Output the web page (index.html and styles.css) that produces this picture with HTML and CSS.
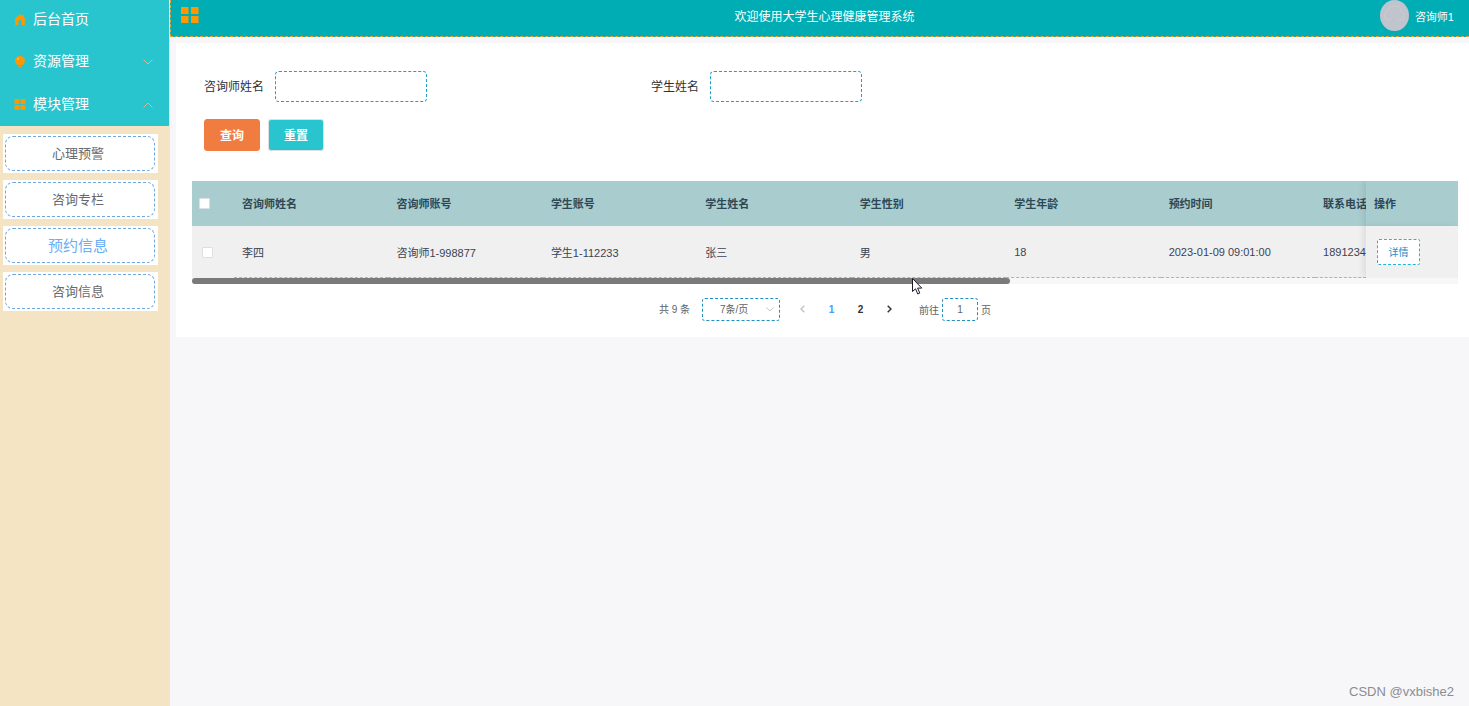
FILE: index.html
```html
<!DOCTYPE html>
<html lang="zh-CN">
<head>
<meta charset="utf-8">
<title>大学生心理健康管理系统</title>
<link rel="stylesheet" href="styles.css">
</head>
<body>
<div class="layout">
  <aside class="sidebar">
    <nav class="menu">
      <a class="menu-item menu-home" href="#">
        <svg class="menu-icon" viewBox="0 0 12 12"><path d="M6 .6 0 6h1.2v5.500h3.100V8.200a1.700 1.700 0 0 1 3.400 0v3.300h3.100V6H12L9.900 4.100V1.600H8.400v1.100z"/></svg>
        <span class="menu-text">后台首页</span>
      </a>
      <button class="menu-item" type="button">
        <svg class="menu-icon" viewBox="0 0 12 14"><path d="M6 1a5.300 5.300 0 0 0-5.300 5.200c0 2.100 1.300 3.300 2.800 4.700h5c1.500-1.400 2.800-2.600 2.800-4.700A5.300 5.300 0 0 0 6 1zM4.300 11.600h3.400v1.600H4.300z"/><path class="shine" d="M3 5.500A3 3 0 0 1 5 3.300"/></svg>
        <span class="menu-text">资源管理</span>
        <svg class="chevron" viewBox="0 0 10 6"><path d="M.5.500 5 5 9.500.500"/></svg>
      </button>
      <button class="menu-item" type="button">
        <svg class="menu-icon" viewBox="0 0 12 12"><path d="M.5.500h5v5h-5zM6.500.500h5v5h-5zM.5 6.500h5v5h-5zM6.500 6.500h5v5h-5z"/></svg>
        <span class="menu-text">模块管理</span>
        <svg class="chevron" viewBox="0 0 10 6"><path d="M.5 5.500 5 1l4.500 4.500"/></svg>
      </button>
    </nav>
    <nav class="submenu">
      <a class="sub-item" href="#"><span class="sub-label">心理预警</span></a>
      <a class="sub-item" href="#"><span class="sub-label">咨询专栏</span></a>
      <a class="sub-item active" href="#"><span class="sub-label">预约信息</span></a>
      <a class="sub-item" href="#"><span class="sub-label">咨询信息</span></a>
    </nav>
  </aside>

  <div class="content">
    <header class="topbar">
      <button class="collapse" type="button" aria-label="折叠菜单">
        <svg viewBox="0 0 18 16"><path d="M0 0h7.500v7H0zM10 0h7.500v7H10zM0 9h7.500v7H0zM10 9h7.500v7H10z"/></svg>
      </button>
      <h1 class="title">欢迎使用大学生心理健康管理系统</h1>
      <div class="user">
        <svg class="avatar" viewBox="0 0 29 31"><ellipse cx="14.500" cy="15.500" rx="14.500" ry="15.500"/><path d="M8 20a4.500 4.500 0 0 1-1-8.500 7.500 7.500 0 0 1 14.500 0A4.500 4.500 0 0 1 21 20c-2 0-3-.5-3.500-1.500M8 20c2 0 3-.5 3.500-1.500"/></svg>
        <span>咨询师1</span>
      </div>
    </header>

    <main class="card">
      <form class="search">
        <div class="fields">
          <div class="field">
            <label for="counselor">咨询师姓名</label>
            <input id="counselor" class="text-input" type="text">
          </div>
          <div class="field">
            <label for="student">学生姓名</label>
            <input id="student" class="text-input" type="text">
          </div>
        </div>
        <div class="actions">
          <button class="btn btn-query" type="button">查询</button>
          <button class="btn btn-reset" type="button">重置</button>
        </div>
      </form>

      <div class="table-wrap">
        <table class="table">
          <colgroup>
            <col class="col-check">
            <col class="col-data" span="7">
            <col>
            <col class="col-action">
          </colgroup>
          <thead>
            <tr>
              <th class="check-cell"><input class="check" type="checkbox" aria-label="全选"></th>
              <th>咨询师姓名</th>
              <th>咨询师账号</th>
              <th>学生账号</th>
              <th>学生姓名</th>
              <th>学生性别</th>
              <th>学生年龄</th>
              <th>预约时间</th>
              <th class="clipped">联系电话</th>
              <th class="fixed">操作</th>
            </tr>
          </thead>
          <tbody>
            <tr>
              <td class="check-cell row-check"><input class="check" type="checkbox" aria-label="选择李四"></td>
              <td>李四</td>
              <td>咨询师1-998877</td>
              <td>学生1-112233</td>
              <td>张三</td>
              <td>男</td>
              <td>18</td>
              <td>2023-01-09 09:01:00</td>
              <td class="clipped">1891234</td>
              <td class="fixed"><button class="detail" type="button">详情</button></td>
            </tr>
          </tbody>
        </table>
      </div>
      <div class="scroll-track">
        <div class="scroll-thumb"></div>
        <svg class="pointer" viewBox="0 0 11 17"><path d="M.5.500v13l3-2.700 2.300 5.200 2-1-2.200-4.900h4.200z"/></svg>
      </div>

      <div class="pagination">
        <span class="total">共 9 条</span>
        <div class="size">
          <select class="size-select" aria-label="每页条数"><option>7条/页</option></select>
          <svg class="size-arrow" viewBox="0 0 8 5"><path d="M.5.500 4 4 7.500.500"/></svg>
        </div>
        <button class="page disabled" type="button" aria-label="上一页"><svg viewBox="0 0 5 8"><path d="M4.300.700 1 4l3.300 3.300"/></svg></button>
        <button class="page current" type="button">1</button>
        <button class="page" type="button">2</button>
        <button class="page" type="button" aria-label="下一页"><svg viewBox="0 0 5 8"><path d="M.700.700 4 4 .700 7.300"/></svg></button>
        <label class="jump">前往<input class="jump-input" type="text" value="1">页</label>
      </div>
    </main>
    <footer class="watermark">CSDN @vxbishe2</footer>
  </div>
</div>
</body>
</html>
```
FILE: styles.css
```css
* {
  box-sizing: border-box;
}

body {
  margin: 0;
  font-family: "Liberation Sans", "Noto Sans CJK SC", sans-serif;
  font-size: 12px;
  color: #303133;
  background: #f7f7fa;
}

button,
input,
select {
  margin: 0;
  font-family: inherit;
}

a {
  text-decoration: none;
}

.layout {
  display: flex;
  min-height: 100vh;
}

/* Sidebar */

.sidebar {
  flex: none;
  width: 170px;
  background: #f5e4c3;
  border-right: 1px solid #e6e6e6;
}

.menu {
  display: flex;
  flex-direction: column;
  background: #29c5ce;
}

.menu-item {
  display: flex;
  align-items: center;
  gap: 7px;
  height: 43px;
  padding: 0 16px 0 14px;
  border: 0;
  background: none;
  color: #fff;
  font-size: 14px;
}

.menu-home {
  height: 40px;
  padding-bottom: 2px;
}

.menu-text {
  padding-bottom: 3px;
}

.menu-icon {
  width: 12px;
  height: 13px;
  fill: #ff9800;
}

.shine {
  fill: none;
  stroke: #ffd28a;
}

.chevron {
  width: 10px;
  height: 6px;
  margin-left: auto;
  fill: none;
  stroke: #d9b98a;
}

.submenu {
  display: flex;
  flex-direction: column;
  gap: 7px;
  padding: 8px 11px 8px 3px;
}

.sub-item {
  display: flex;
  height: 39px;
  padding: 2px;
  padding-right: 3px;
  background: #fff;
  color: #666a70;
  font-size: 13px;
}

.sub-label {
  flex: 1;
  display: flex;
  align-items: center;
  justify-content: center;
  padding: 0 4px 2px 0;
  border: 1px dashed #6fa8dc;
  border-radius: 8px;
}

.sub-item.active {
  color: #6aaef5;
  font-size: 15px;
}

/* Header */

.content {
  flex: 1;
  min-width: 0;
  display: flex;
  flex-direction: column;
}

.topbar {
  display: grid;
  grid-template-columns: 1fr auto 1fr;
  height: 37px;
  padding: 0 15px 5px 10px;
  background: #00adb5;
  border-bottom: 1px dashed #f0a030;
  border-left: 1px dashed #f0a030;
  color: #fff;
}

.collapse {
  justify-self: start;
  align-self: center;
  display: flex;
  padding: 0 0 2px;
  border: 0;
  background: none;
}

.collapse svg {
  width: 18px;
  height: 16px;
  fill: #ff9800;
}

.title {
  align-self: center;
  margin: 0;
  padding-left: 14px;
  font-size: 12px;
  font-weight: 400;
}

.user {
  justify-self: end;
  display: flex;
  align-items: center;
  gap: 6px;
  font-size: 11px;
}

.avatar {
  width: 29px;
  height: 31px;
  fill: #c0c4cc;
}

.avatar path {
  fill: none;
  stroke: #cfccd0;
}

/* Card */

.card {
  margin: 6px 0 0 6px;
  padding: 28px 11px 16px 16px;
  background: #fff;
}

.search {
  padding: 0 12px;
}

.fields {
  display: grid;
  grid-template-columns: 36% 1fr;
}

.field {
  display: flex;
  align-items: center;
  gap: 11px;
}

.field label {
  padding-bottom: 2px;
  font-size: 12px;
}

.text-input {
  width: 152px;
  height: 31px;
  padding: 0 8px;
  border: 1px dashed #1f9fc4;
  border-radius: 4px;
  background: #fff;
  font-size: 12px;
}

.actions {
  display: flex;
  gap: 8px;
  margin: 17px 0 30px;
}

.btn {
  width: 56px;
  height: 32px;
  padding: 0 0 2px;
  border: 1px solid #dcdfe6;
  border-radius: 3px;
  color: #fff;
  font-size: 12px;
  font-weight: 700;
}

.btn-query {
  background: #f17c40;
  border-color: #f17c40;
}

.btn-reset {
  background: #29c5ce;
}

/* Table */

.table-wrap {
  overflow: hidden;
}

.table {
  width: 100%;
  min-width: 1100px;
  table-layout: fixed;
  border-collapse: separate;
  border-spacing: 0;
  font-size: 11px;
  color: #3c4353;
}

.col-check {
  width: 42px;
}

.col-data {
  width: 12.2%;
}

.col-action {
  width: 92px;
}

.table th,
.table td {
  padding: 0 8px;
  text-align: left;
  white-space: nowrap;
}

.table th {
  height: 45px;
  padding-bottom: 2px;
  background: #a9cdcf;
  color: #2f4856;
}

.table td {
  height: 52px;
  background: #f0f0f0;
  border-bottom: 1px dashed #e6a088;
}

.table .clipped {
  padding-right: 0;
  overflow: hidden;
}

.table .check-cell {
  padding: 0 0 0 7px;
  border-bottom: 0;
}

.table .row-check {
  padding-left: 10px;
}

.check {
  display: block;
  appearance: none;
  width: 11px;
  height: 11px;
  border: 1px solid #dcdfe6;
  border-radius: 1px;
  background: #fff;
}

.table .fixed {
  position: sticky;
  right: 0;
  border-bottom: 0;
  box-shadow: -3px 0 6px rgba(0, 0, 0, 0.08);
}

.table td.fixed {
  padding-left: 11px;
}

.detail {
  width: 43px;
  height: 26px;
  padding: 0 0 2px;
  border: 1px dashed #22b5d8;
  border-radius: 2px;
  background: #fff;
  color: #1a8fc8;
  font-size: 10px;
}

.scroll-track {
  position: relative;
  height: 6px;
  background: #f7f7f7;
}

.scroll-thumb {
  width: 64.6%;
  height: 6px;
  border-radius: 3px;
  background: #7a7a7a;
}

.pointer {
  position: absolute;
  left: 56.9%;
  top: 0;
  width: 11px;
  height: 17px;
  fill: #fff;
  stroke: #1a1a2a;
}

/* Pagination */

.pagination {
  display: flex;
  align-items: center;
  justify-content: center;
  margin-top: 14px;
  font-size: 10px;
  color: #606266;
}

.total {
  margin-right: 12px;
  padding-bottom: 2px;
}

.size {
  display: grid;
  align-items: center;
  margin-right: 8px;
}

.size-select {
  grid-area: 1 / 1;
  appearance: none;
  width: 78px;
  height: 23px;
  padding: 0 14px 0 0;
  border: 1px dashed #1f8fc4;
  border-radius: 3px;
  background: #fff;
  color: #606266;
  font-size: 10px;
  text-align: center;
  text-align-last: center;
}

.size-arrow {
  grid-area: 1 / 1;
  justify-self: end;
  width: 8px;
  height: 5px;
  margin-right: 6px;
  fill: none;
  stroke: #c0c4cc;
  pointer-events: none;
}

.page {
  display: flex;
  align-items: center;
  justify-content: center;
  width: 29px;
  height: 22px;
  padding: 0 0 1px;
  border: 0;
  background: none;
  color: #303133;
  font-size: 10px;
  font-weight: 700;
}

.page svg {
  width: 5px;
  height: 8px;
  fill: none;
  stroke: #303133;
  stroke-width: 1.4;
}

.page.disabled svg {
  stroke: #c0c4cc;
}

.page.current {
  color: #409eff;
}

.jump {
  display: flex;
  align-items: center;
  margin-left: 15px;
}

.jump-input {
  width: 36px;
  height: 23px;
  margin: 0 3px;
  padding: 0;
  border: 1px dashed #1f8fc4;
  border-radius: 3px;
  background: #fff;
  color: #606266;
  font-size: 10px;
  text-align: center;
}

.watermark {
  margin-top: auto;
  padding: 0 15px 7px;
  color: #8c8c90;
  font-size: 13px;
  text-align: right;
}
```
